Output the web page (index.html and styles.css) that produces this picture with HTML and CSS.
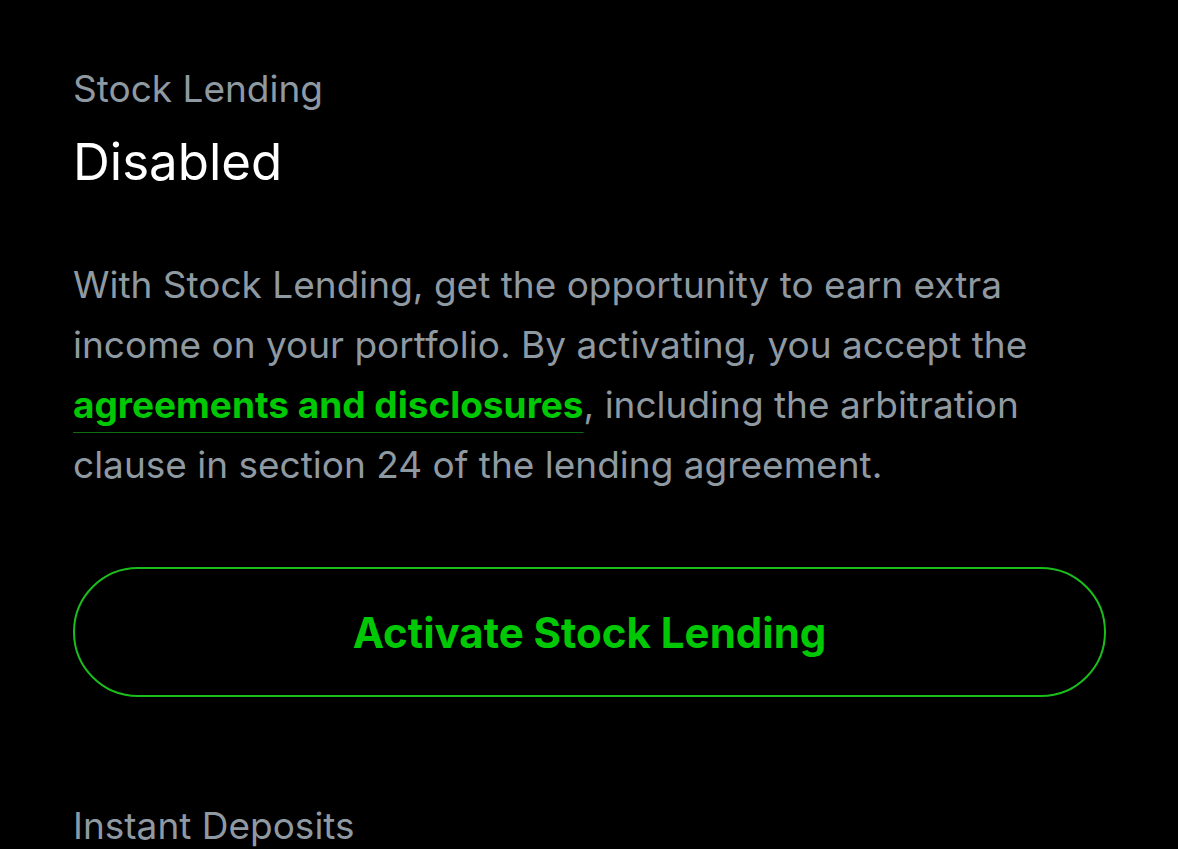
FILE: index.html
```html
<!DOCTYPE html>
<html>

<head>
    <title>Stock Lending</title>
    <meta charset="utf-8">
    <link rel="stylesheet" href="styles.css">
</head>

<body>
    <div class="settings_container">
        <div class="setting_section">
            <div class="setting_label">Stock Lending</div>
            <div class="setting_value">Disabled</div>
            <p class="setting_text">
                With Stock Lending, get the opportunity to earn extra income on your portfolio. By activating, you accept the
                <a class="green-link" href="#">agreements and disclosures</a>, including the arbitration clause in section 24 of the lending agreement.
            </p>
            <button class="outline-button" type="button">Activate Stock Lending</button>
        </div>

        <div class="setting_section next-section">
            <div class="setting_label">Instant Deposits</div>
        </div>
    </div>
</body>

</html>
```

FILE: styles.css
```css
:root {
    --bg_color: #000000;
    --muted_text: #8f99a2;
    --main_text: #ffffff;
    --green: #00c805;
    --green_border: #1bbd1b;
    --green_underline: #0d6b10;
    --text_size: 37px;
}

body {
    background: var(--bg_color);
    color: var(--main_text);
    margin: 0px;
    font-family: Inter, "Noto Sans", sans-serif;
}

.settings_container {
    padding: 67px 72px 0 73px;
}

.setting_label {
    color: var(--muted_text);
    font-size: var(--text_size);
    line-height: 44px;
}

.setting_value {
    margin-top: 21px;
    font-size: 51px;
    line-height: 60px;
}

.setting_text {
    margin: 63px 0 0 0;
    color: var(--muted_text);
    font-size: var(--text_size);
    line-height: 60px;
}

.green-link {
    color: var(--green);
    font-weight: 700;
    text-decoration: underline;
    text-decoration-color: var(--green_underline);
    text-decoration-thickness: 1px;
    text-underline-offset: 14px;
}

.outline-button {
    display: block;
    width: 100%;
    height: 130px;
    margin-top: 72px;
    background: transparent;
    border: 2px solid var(--green_border);
    border-radius: 65px;
    color: var(--green);
    font-family: inherit;
    font-size: 42px;
    font-weight: 700;
}

.next-section {
    margin-top: 107px;
}
```
